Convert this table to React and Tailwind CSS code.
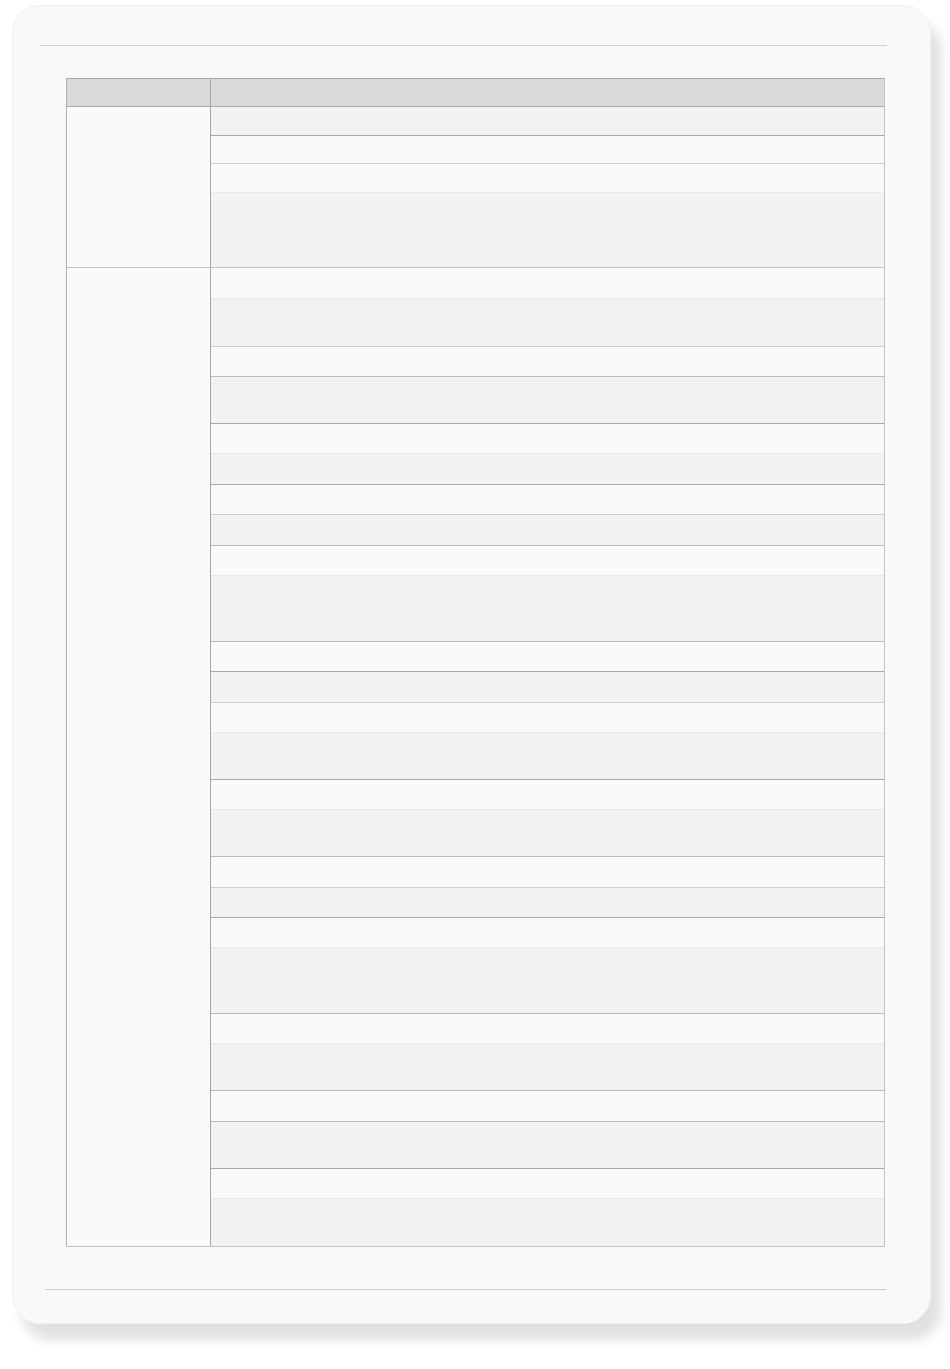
import React from 'react';

// row lines: bottom border shade of each row
const DARK = 'border-[#a9a9a9]';
const MID = 'border-[#bbbbbb]';
const SOFT = 'border-[#cdcdcd]';
const FAINT = 'border-[#e9e9e9]';

const LIGHT_BG = 'bg-[#fafafa]';
const SHADE_BG = 'bg-[#f2f2f2]';

const groups = [
  {
    id: 'g1',
    rows: [
      { h: 'h-[29px]', bg: SHADE_BG, line: DARK },
      { h: 'h-[28px]', bg: LIGHT_BG, line: SOFT },
      { h: 'h-[29px]', bg: LIGHT_BG, line: FAINT },
      { h: 'h-[74px]', bg: SHADE_BG, line: null },
    ],
  },
  {
    id: 'g2',
    rows: [
      { h: 'h-[31px]', bg: LIGHT_BG, line: FAINT },
      { h: 'h-[48px]', bg: SHADE_BG, line: SOFT },
      { h: 'h-[30px]', bg: LIGHT_BG, line: MID },
      { h: 'h-[47px]', bg: SHADE_BG, line: DARK },
      { h: 'h-[30px]', bg: LIGHT_BG, line: FAINT },
      { h: 'h-[31px]', bg: SHADE_BG, line: DARK },
      { h: 'h-[30px]', bg: LIGHT_BG, line: SOFT },
      { h: 'h-[31px]', bg: SHADE_BG, line: MID },
      { h: 'h-[30px]', bg: LIGHT_BG, line: FAINT },
      { h: 'h-[66px]', bg: SHADE_BG, line: MID },
      { h: 'h-[30px]', bg: LIGHT_BG, line: DARK },
      { h: 'h-[31px]', bg: SHADE_BG, line: SOFT },
      { h: 'h-[30px]', bg: LIGHT_BG, line: FAINT },
      { h: 'h-[47px]', bg: SHADE_BG, line: DARK },
      { h: 'h-[30px]', bg: LIGHT_BG, line: FAINT },
      { h: 'h-[47px]', bg: SHADE_BG, line: MID },
      { h: 'h-[31px]', bg: LIGHT_BG, line: SOFT },
      { h: 'h-[30px]', bg: SHADE_BG, line: DARK },
      { h: 'h-[30px]', bg: LIGHT_BG, line: FAINT },
      { h: 'h-[66px]', bg: SHADE_BG, line: MID },
      { h: 'h-[30px]', bg: LIGHT_BG, line: FAINT },
      { h: 'h-[47px]', bg: SHADE_BG, line: MID },
      { h: 'h-[31px]', bg: LIGHT_BG, line: MID },
      { h: 'h-[47px]', bg: SHADE_BG, line: DARK },
      { h: 'h-[30px]', bg: LIGHT_BG, line: FAINT },
      { h: 'h-[47px]', bg: SHADE_BG, line: null },
    ],
  },
];

const Group = ({ group, last }) => (
  <div className={`flex ${last ? '' : 'border-b border-[#c4c4c4]'}`}>
    <div className="w-[144px] shrink-0 bg-[#fafafa] border-r border-[#a6a6a6]" />
    <div className="flex-1 flex flex-col">
      {group.rows.map((row, i) => (
        <div
          key={i}
          className={`${row.h} ${row.bg} ${row.line ? `border-b ${row.line}` : ''}`}
        />
      ))}
    </div>
  </div>
);

const App = () => {
  return (
    <div className="min-h-[1369px] bg-white pt-[5px] pl-[12px]" style={{ fontFamily: '"Liberation Sans", Arial, sans-serif' }}>
      <div className="w-[919px] h-[1319px] bg-[#f9f9f9] rounded-[28px] border border-[#f1f1f1] shadow-[10px_16px_12px_rgba(0,0,0,0.12)] flex flex-col">
        <div className="mt-[39px] ml-[27px] w-[847px] h-px bg-[#d2d2d2]" />

        <div className="mt-[32px] ml-[53px] w-[819px] border-t border-l border-t-[#a9a9a9] border-l-[#b0b0b0] border-r border-b border-r-[#c6c6c6] border-b-[#c4c4c4]">
          <div className="flex h-[28px] bg-[#d9d9d9] border-b border-[#a9a9a9]">
            <div className="w-[144px] shrink-0 border-r border-[#a6a6a6]" />
            <div className="flex-1" />
          </div>
          {groups.map((g, i) => (
            <Group key={g.id} group={g} last={i === groups.length - 1} />
          ))}
        </div>

        <div className="mt-[42px] ml-[32px] w-[841px] h-px bg-[#cfcfcf]" />
      </div>
    </div>
  );
};

export default App;
